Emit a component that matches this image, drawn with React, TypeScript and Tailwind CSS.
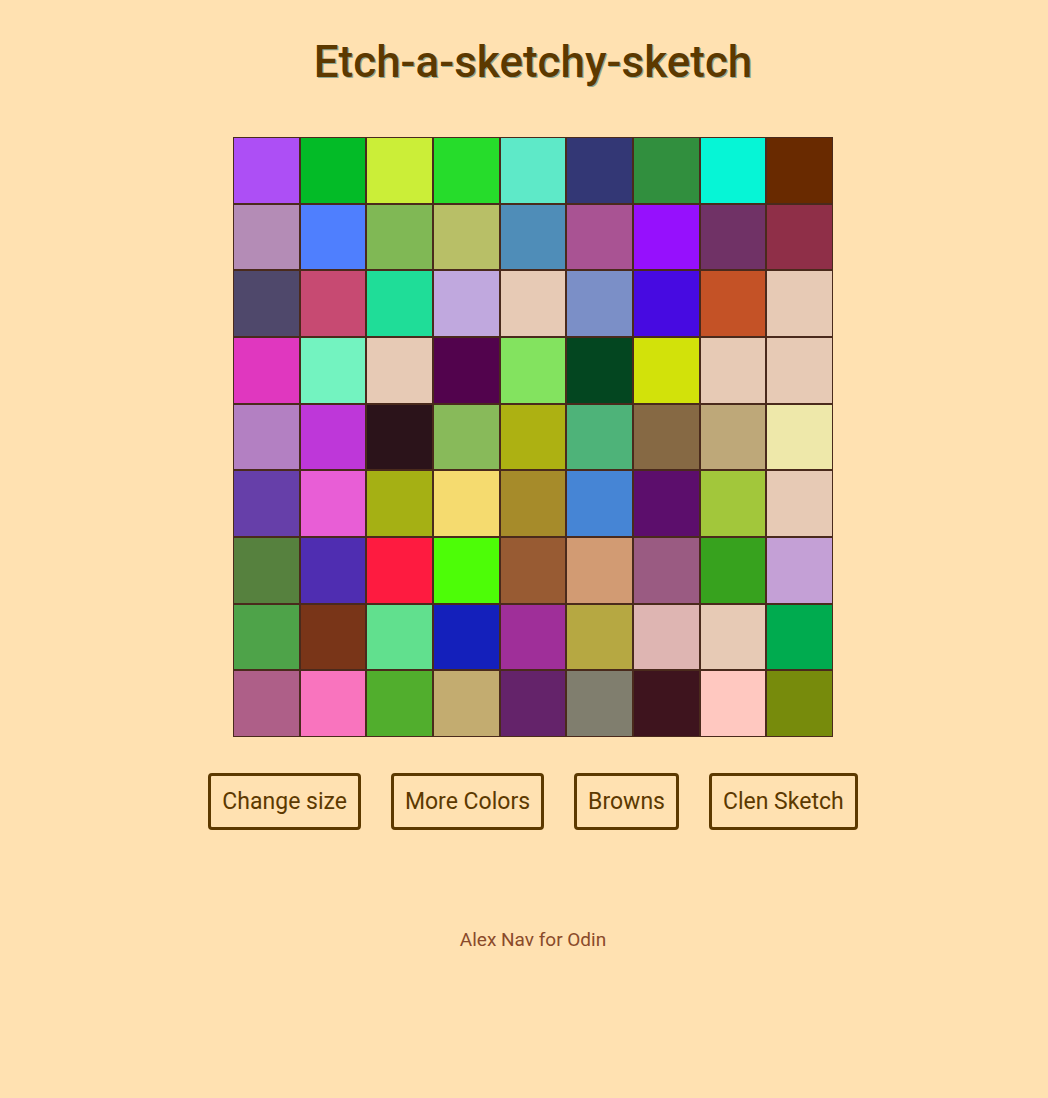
import React from "react";

const colors: string[] = [
  "#ad4ff5", "#03bb27", "#cbee38", "#26dc2b", "#5ee9c8", "#333775", "#318f3e", "#06f5d6", "#692a00",
  "#b48cb6", "#4f7ffe", "#80b855", "#b8bf67", "#4f8db8", "#a95393", "#9610fd", "#703266", "#8f2f48",
  "#4f486b", "#c74a72", "#1fdd98", "#c0a8de", "#e7cab5", "#7b8fc7", "#470ae1", "#c45226", "#e7cab5",
  "#e037bf", "#73f3c0", "#e7cab5", "#52034d", "#83e35f", "#034620", "#d2e20a", "#e7cab5", "#e7cab5",
  "#b380c2", "#be37d9", "#2b131a", "#88ba5a", "#adb112", "#4eb379", "#866944", "#bea879", "#eee8aa",
  "#663fa9", "#e85ed6", "#a5b014", "#f5db6f", "#a68b2a", "#4685d5", "#5c0e6c", "#a2c73b", "#e7cab5",
  "#56813e", "#4f2db1", "#fe1b40", "#4dfd07", "#985b33", "#d29b73", "#9a5b82", "#37a21e", "#c4a0d6",
  "#4ea349", "#793518", "#61e08e", "#1420bb", "#9f2f99", "#b6a842", "#deb5b2", "#e7cab5", "#00ab4f",
  "#ae5f88", "#f974be", "#51ae2d", "#c3ac70", "#64236a", "#807e6e", "#3e141e", "#ffc8c0", "#778b0c",
];

const buttons = ["Change size", "More Colors", "Browns", "Clen Sketch"];

const App: React.FC = () => {
  return (
    <div className="min-h-[1098px] bg-[#ffe1b1] font-['Roboto',sans-serif] pl-[18px] flex flex-col items-center">
      <h1 className="mt-[34px] text-[44px] leading-[56px] font-medium text-[#5c3900] [text-shadow:1px_1px_0_#8fa894]">
        Etch-a-sketchy-sketch
      </h1>
      <div className="mt-[47px] grid grid-cols-9 w-[600px] h-[600px]">
        {colors.map((c, i) => (
          <div
            key={i}
            className="border border-[#4a2a1c]"
            style={{ backgroundColor: c }}
          />
        ))}
      </div>
      <div className="mt-[36px] flex gap-[30px]">
        {buttons.map((b) => (
          <button
            key={b}
            className="h-[57px] px-[11px] pt-[2px] border-[3px] border-[#5c3900] rounded-[4px] text-[23px] text-[#5c3900] bg-transparent"
          >
            {b}
          </button>
        ))}
      </div>
      <p className="mt-[96px] text-[19px] text-[#8a4a2a]">Alex Nav for Odin</p>
    </div>
  );
};

export default App;
